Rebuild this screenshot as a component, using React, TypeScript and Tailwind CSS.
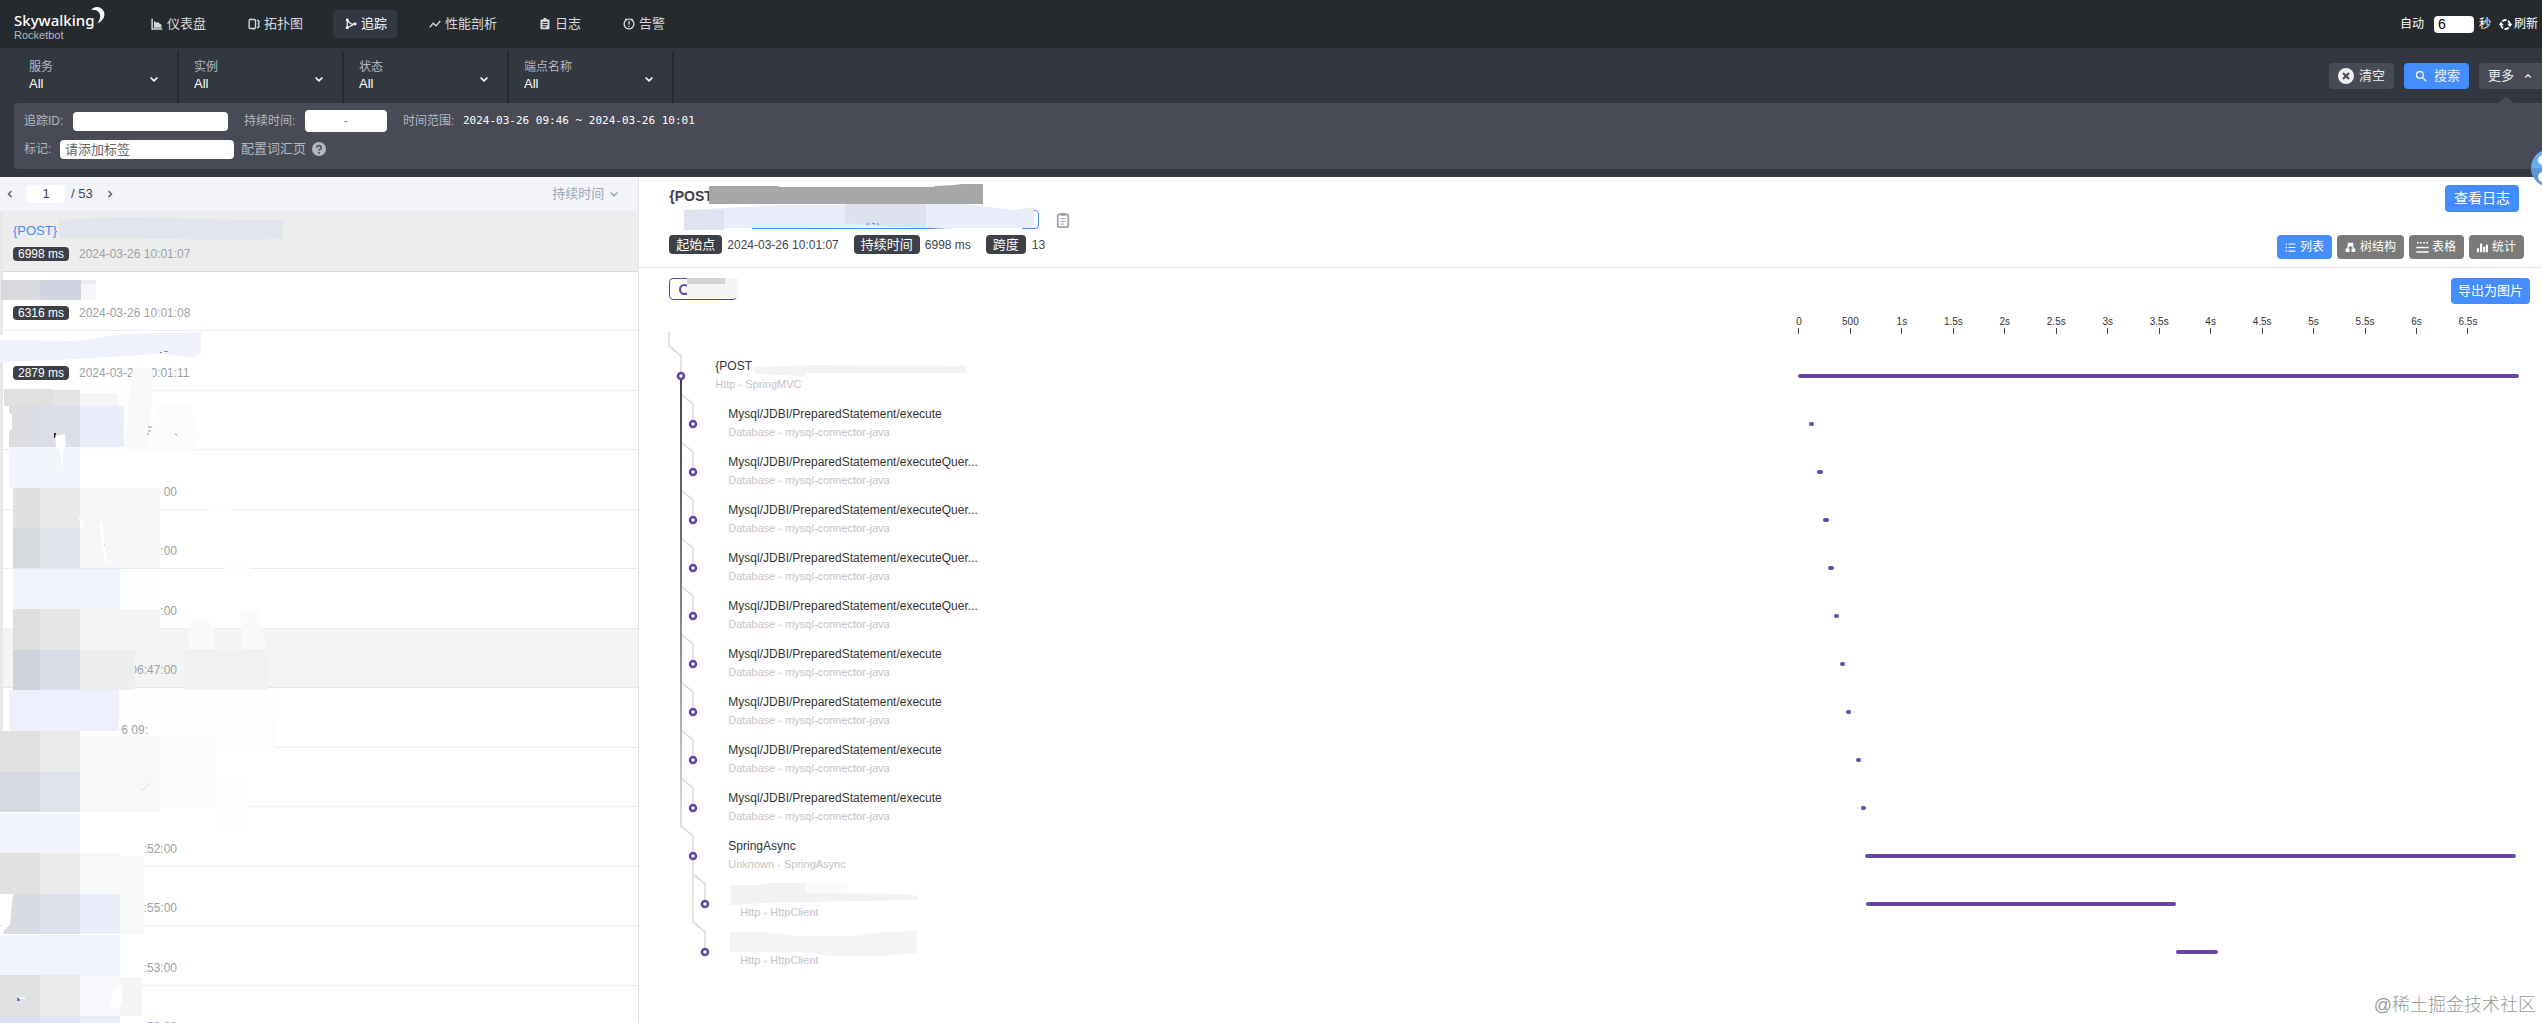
import type { ReactNode } from 'react';

const navItems = [
  { label: '仪表盘', icon: 'dashboard' },
  { label: '拓扑图', icon: 'topology' },
  { label: '追踪', icon: 'trace', active: true },
  { label: '性能剖析', icon: 'profile' },
  { label: '日志', icon: 'log' },
  { label: '告警', icon: 'alarm' },
];

const filters = [
  { id: 'service', label: '服务' },
  { id: 'instance', label: '实例' },
  { id: 'status', label: '状态' },
  { id: 'endpoint', label: '端点名称' },
];

type Trace = { name?: string; duration?: string; time?: string; cut?: boolean; state?: string };

const traces: Trace[] = [
  { name: '{POST}', duration: '6998 ms', time: '2024-03-26 10:01:07', state: 'selected' },
  { duration: '6316 ms', time: '2024-03-26 10:01:08' },
  { duration: '2879 ms', time: '2024-03-26 10:01:11' },
  {},
  { time: '00' },
  { time: ':00' },
  { time: ':00' },
  { time: '06:47:00', state: 'hover' },
  { time: '6 09:', cut: true },
  {},
  { time: ':52:00' },
  { time: ':55:00' },
  { time: ':53:00' },
  { time: ':59:00' },
];

type Span = { name?: string; sub: string; depth: number; start: number; length: number };

const db = 'Database - mysql-connector-java';
const execute = 'Mysql/JDBI/PreparedStatement/execute';
const executeQuery = 'Mysql/JDBI/PreparedStatement/executeQuer...';

// start and length are percentages of the whole trace
const spans: Span[] = [
  { name: '{POST', sub: 'Http - SpringMVC', depth: 0, start: 0, length: 99.9 },
  { name: execute, sub: db, depth: 1, start: 1.5, length: 0.7 },
  { name: executeQuery, sub: db, depth: 1, start: 2.6, length: 0.8 },
  { name: executeQuery, sub: db, depth: 1, start: 3.4, length: 0.8 },
  { name: executeQuery, sub: db, depth: 1, start: 4.1, length: 0.8 },
  { name: executeQuery, sub: db, depth: 1, start: 4.9, length: 0.7 },
  { name: execute, sub: db, depth: 1, start: 5.8, length: 0.7 },
  { name: execute, sub: db, depth: 1, start: 6.6, length: 0.7 },
  { name: execute, sub: db, depth: 1, start: 8, length: 0.7 },
  { name: execute, sub: db, depth: 1, start: 8.7, length: 0.7 },
  { name: 'SpringAsync', sub: 'Unknown - SpringAsync', depth: 1, start: 9.3, length: 90.2 },
  { sub: 'Http - HttpClient', depth: 2, start: 9.4, length: 43 },
  { sub: 'Http - HttpClient', depth: 2, start: 52.4, length: 5.8 },
];

const ticks = ['0', '500', '1s', '1.5s', '2s', '2.5s', '3s', '3.5s', '4s', '4.5s', '5s', '5.5s', '6s', '6.5s'];

const indent = ['pl-[46px]', 'pl-[59px]', 'pl-[71px]'];

function Icon({ name, className = 'size-3' }: { name: string; className?: string }) {
  const shapes: Record<string, ReactNode> = {
    dashboard: (
      <>
        <path d="M1.5 1v13.5H15" fill="none" stroke="currentColor" strokeWidth="2" />
        <path d="M4 4l4 2.5V5l6 4v4H4z" />
      </>
    ),
    topology: (
      <g fill="none" stroke="currentColor" strokeWidth="1.8">
        <rect x="1.5" y="2" width="8.5" height="12" rx="1.5" />
        <path d="M4 .5v1.500M8 14v1.500M12 3l2.500 1v3l-1 1 1 1v3L12 13" />
      </g>
    ),
    trace: (
      <g fill="none" stroke="currentColor" strokeWidth="1.5">
        <path d="M3 2v11M3 13l8-4M3 3l5 5h5" />
        <circle cx="3" cy="2.500" r="1" />
        <circle cx="3" cy="13" r="1.200" />
        <circle cx="13.500" cy="8" r="1.200" />
      </g>
    ),
    profile: <path d="M1 12.500L5.500 7l4 3.500L15 4" fill="none" stroke="currentColor" strokeWidth="1.800" />,
    log: (
      <path
        fillRule="evenodd"
        d="M3 2h2.500a2.500 2.500 0 015 0H13a1 1 0 011 1v11a1 1 0 01-1 1H3a1 1 0 01-1-1V3a1 1 0 011-1zm1.500 3v1.500h7V5zm0 3v1.500h7V8zm0 3v1.500h5V11z"
      />
    ),
    alarm: (
      <g fill="none" stroke="currentColor" strokeWidth="1.800">
        <circle cx="8" cy="8" r="6.500" />
        <path d="M8 4v5M8 10.500V12M5 1L3 3M11 1l2 2" />
      </g>
    ),
    down: <path d="M2.500 5.500L8 11l5.500-5.500" fill="none" stroke="currentColor" strokeWidth="2.500" />,
    up: <path d="M2.500 11L8 5.500 13.500 11" fill="none" stroke="currentColor" strokeWidth="2.500" />,
    left: <path d="M10 4L6 8l4 4" fill="none" stroke="currentColor" strokeWidth="2" />,
    right: <path d="M6 4l4 4-4 4" fill="none" stroke="currentColor" strokeWidth="2" />,
    clear: (
      <>
        <circle cx="8" cy="8" r="8" />
        <path d="M5 5l6 6M11 5l-6 6" stroke="#484b55" strokeWidth="2" />
      </>
    ),
    search: (
      <g fill="none" stroke="currentColor" strokeWidth="1.700">
        <circle cx="6.500" cy="6.500" r="4.500" />
        <path d="M10 10l5 5" />
      </g>
    ),
    help: (
      <>
        <circle cx="8" cy="8" r="8" />
        <path d="M5.500 6.500a2.500 2.500 0 115 0c0 1.800-2.500 1.800-2.500 3.500M8 11.500v1.800" fill="none" stroke="#484b55" strokeWidth="1.800" />
      </>
    ),
    refresh: (
      <>
        <g fill="none" stroke="currentColor" strokeWidth="2.200">
          <path d="M2.500 8A5.500 5.500 0 005 12.600M6.800 13.400A5.500 5.500 0 0012 11.800M13.500 8A5.500 5.500 0 0011 3.400M9.200 2.600A5.500 5.500 0 004 4.200" />
        </g>
        <path d="M-.5 9L2.500 4.500 5.800 9zM10.200 7L13.500 11.500 16.500 7z" />
      </>
    ),
    copy: (
      <>
        <rect x="2" y="1.500" width="12" height="14.500" rx="1.500" fill="none" stroke="currentColor" strokeWidth="2" />
        <path d="M5 0h6v3H5zM5 6h6v1.200H5zM5 9h6v1.200H5zM5 12h4v1.200H5z" />
      </>
    ),
    list: <path d="M1 2h2v2H1zM5 2h10v1.700H5zM1 7h2v2H1zM5 7.200h10v1.700H5zM1 12h2v2H1zM5 12.300h10V14H5z" />,
    tree: (
      <>
        <path d="M4 1h8v5.500H4zM1 9.500h5.500v5H1zM9.500 9.500H15v5H9.500z" />
        <path d="M5 6L3.500 10M11 6l1.500 4" fill="none" stroke="currentColor" strokeWidth="2" />
      </>
    ),
    table: <path d="M0 0h2.500v2H0zM4.500 0H7v2H4.500zM9 0h2.500v2H9zM13.500 0H16v2h-2.500zM-1 7h18v2.200H-1zM-1 13.500h18v2.200H-1z" />,
    stats: <path d="M0 9h3v6H0zM4.500 2h3v13h-3zM9 7h3v8H9zM13 4h3v11h-3z" />,
  };
  return (
    <svg viewBox="0 0 16 16" className={`${className} shrink-0 overflow-visible`} fill="currentColor" aria-hidden="true">
      {shapes[name]}
    </svg>
  );
}

function Header() {
  return (
    <header className="flex h-12 shrink-0 items-center bg-[#252a2f] text-[13px] text-[#d6d8dc]">
      <div className="relative ml-3.5 mt-1 w-[125px] font-['Noto_Sans'] text-white">
        <div className="text-[15px] leading-[18px] font-medium">Skywalking</div>
        <div className="font-['Liberation_Sans'] text-[11px] leading-3 text-[#b5b8c2]">Rocketbot</div>
        <svg viewBox="0 0 14 17" className="absolute -top-1 left-[77px] h-[17px] w-3.5" fill="#fff" aria-hidden="true">
          <path d="M0 3C3-.5 8-1 11.500 2.500c4 4.500 1.500 11-5 14 3-4.500 3.500-8 1.500-11C6 3 3 2.500 0 3z" />
        </svg>
      </div>
      <nav className="flex gap-5">
        {navItems.map((item) => (
          <a
            key={item.label}
            href="#"
            className={`flex h-7 items-center gap-1 rounded pr-2.5 pl-3 ${item.active ? 'bg-[#333743] text-white' : ''}`}
          >
            <Icon name={item.icon} />
            {item.label}
          </a>
        ))}
      </nav>
      <div className="ml-auto flex items-center pr-1 text-xs text-white">
        <label htmlFor="auto">自动</label>
        <input id="auto" defaultValue="6" className="mr-[5px] ml-2.5 h-[17px] w-10 rounded-sm bg-white px-1 text-sm text-black" />
        <span>秒</span>
        <button className="ml-2 flex items-center gap-0.5">
          <Icon name="refresh" className="size-[13px]" />
          刷新
        </button>
      </div>
    </header>
  );
}

function SearchBar() {
  return (
    <section className="relative shrink-0 bg-[#333840] pb-2 text-xs text-[#b5b8c2]">
      <div className="flex h-[55px] items-center pl-3.5">
        {filters.map((f) => (
          <div key={f.id} className="relative mt-[3px] flex h-[52px] w-[165px] flex-col justify-center border-r-2 border-[#252a2f] pb-0.5 pl-[15px]">
            <label htmlFor={f.id} className="leading-4">{f.label}</label>
            <select id={f.id} className="w-full appearance-none text-[13px] leading-[18px] text-white">
              <option>All</option>
            </select>
            <span className="pointer-events-none absolute top-[23px] right-[18px] text-white">
              <Icon name="down" className="size-2.5" />
            </span>
          </div>
        ))}
        <div className="ml-auto flex h-[26px] gap-2.5 text-[13px] text-[#eee]">
          <button className="flex items-center gap-[5px] rounded bg-[#484b55] px-[9px]">
            <Icon name="clear" className="size-4" />
            清空
          </button>
          <button className="flex items-center gap-[7px] rounded bg-[#448dfe] pr-[9px] pl-[11px]">
            <Icon name="search" />
            搜索
          </button>
          <button className="flex items-center gap-2.5 rounded-l bg-[#484b55] pr-2.5 pl-[9px]">
            更多
            <Icon name="up" className="size-2" />
          </button>
        </div>
      </div>
      <svg viewBox="0 0 16 7" className="absolute top-12 right-7 h-[7px] w-4" aria-hidden="true">
        <path d="M0 7l8-7 8 7z" fill="#484b55" />
      </svg>
      <div className="ml-3.5 flex h-[66px] flex-col gap-[7px] rounded-l bg-[#484b55] pt-[7px] pl-2.5">
        <div className="flex h-[22px] items-center">
          <label htmlFor="traceId" className="w-[49px]">追踪ID:</label>
          <input id="traceId" className="h-[19px] w-[155px] rounded-sm bg-white px-1 text-black" />
          <label htmlFor="minDuration" className="ml-4 w-[61px]">持续时间:</label>
          <div className="flex h-[22px] w-[82px] items-center rounded-sm bg-white text-[#888]">
            <input id="minDuration" className="w-0 flex-1" />
            <span>-</span>
            <input aria-label="最大持续时间" className="w-0 flex-1" />
          </div>
          <span className="ml-4 w-[60px]">时间范围:</span>
          <span className="font-['DejaVu_Sans_Mono','Liberation_Mono',monospace] text-[11px] text-white">2024-03-26 09:46 ~ 2024-03-26 10:01</span>
        </div>
        <div className="flex h-5 items-center">
          <label htmlFor="tag" className="w-9">标记:</label>
          <input id="tag" placeholder="请添加标签" className="h-[19px] w-[174px] rounded-sm bg-white px-[5px] text-[13px] text-black placeholder:text-[#666]" />
          <a href="#" className="ml-[7px] flex items-center gap-1.5 text-[13px]">
            配置词汇页
            <Icon name="help" className="size-3.5" />
          </a>
        </div>
      </div>
    </section>
  );
}

// Blurred-out service names and timestamps over the trace list
function ListMask() {
  const blocks: [number, number, number, number, string][] = [
    [1, 280, 39, 20, '#d7d9dd'],
    [40, 280, 41, 20, '#d0d4e0'],
    [81, 280, 15, 4, '#ececec'],
    [81, 284, 15, 16, '#f6f6fb'],
    [80, 389, 72, 62, '#fefefe'],
    [4, 389, 50, 17, '#e0e0e0'],
    [54, 390, 26, 16, '#e4e4e4'],
    [9, 406, 31, 41, '#dcdde2'],
    [40, 406, 40, 41, '#dbdde8'],
    [80, 406, 44, 41, '#ebeefa'],
    [80, 393, 38, 13, '#f5f5f5'],
    [9, 447, 71, 41, '#f3f5fd'],
    [13, 488, 27, 40, '#dfdfdf'],
    [40, 488, 40, 40, '#e9e9e9'],
    [13, 528, 27, 40, '#d6dade'],
    [40, 528, 40, 40, '#dfe3ea'],
    [80, 488, 80, 80, '#f6f7f7'],
    [208, 507, 23, 4, '#fefefe'],
    [225, 566, 25, 4, '#fefefe'],
    [13, 569, 27, 40, '#f1f3fc'],
    [40, 569, 80, 40, '#f0f4fe'],
    [120, 569, 40, 40, '#fefefe'],
    [13, 609, 27, 41, '#dedede'],
    [40, 609, 40, 41, '#e7e7e7'],
    [80, 609, 80, 41, '#f4f5f5'],
    [13, 650, 27, 40, '#ced2db'],
    [40, 650, 40, 40, '#d9dde8'],
    [80, 650, 55, 40, '#eceeef'],
    [184, 650, 84, 40, '#f1f1f1'],
    [119, 690, 156, 28, '#fefefe'],
    [160, 718, 115, 33, '#fdfdfd'],
    [9, 690, 110, 41, '#eef1fd'],
    [0, 731, 40, 41, '#e0e1e0'],
    [40, 731, 40, 41, '#e9eae9'],
    [80, 736, 80, 36, '#f8f9fa'],
    [160, 735, 55, 73, '#fcfcfc'],
    [215, 780, 33, 50, '#fefefe'],
    [0, 772, 40, 40, '#d6dae0'],
    [40, 772, 40, 40, '#dfe3ea'],
    [80, 772, 80, 40, '#f8f8f8'],
    [0, 813, 40, 40, '#f1f3fd'],
    [40, 813, 40, 40, '#f3f5fc'],
    [0, 853, 40, 41, '#e1e1e1'],
    [40, 853, 40, 41, '#eaebea'],
    [80, 853, 40, 41, '#f6f8f9'],
    [120, 856, 24, 78, '#f7f8f8'],
    [3, 894, 37, 40, '#d9dbe2'],
    [40, 894, 40, 40, '#dde0ea'],
    [80, 894, 40, 40, '#e9eefa'],
    [0, 935, 40, 40, '#f2f5fd'],
    [40, 935, 80, 40, '#eff3fe'],
    [0, 975, 40, 41, '#dfe1e2'],
    [40, 975, 40, 41, '#e9eae9'],
    [80, 975, 40, 41, '#f6f8fc'],
    [120, 977, 22, 39, '#f5f5f5'],
    [0, 1016, 40, 7, '#d6dfea'],
    [40, 1016, 40, 7, '#dfe5f2'],
    [80, 1016, 40, 7, '#e9effa'],
  ];
  return (
    <svg viewBox="0 212 638 811" className="pointer-events-none absolute top-0 left-0 h-[811px] w-[638px]" aria-hidden="true">
      <path d="M0 211h3v124H0zM0 361h3v370H0z" fill="#e8e8e8" />
      <path d="M58 220l60-3 60 1 60 2h45v19l-55 1-110-2H60z" fill="#e3e5ee" />
      <path d="M0 340l75 1 50-7 76-2v20q-2 5-12 5l-30-3-84 5-75 3z" fill="#eff2fd" />
      {blocks.map(([x, y, w, h, fill]) => (
        <rect key={`${x}-${y}`} x={x} y={y} width={w} height={h} fill={fill} />
      ))}
      <path d="M132 371q6-6 16-3l5 2-4 79h-25z" fill="#f9f9f9" />
      <path d="M156 405l34-1 10 36-6 10h-46z" fill="#fcfcfc" />
      <path d="M4 408l8 7v14l-3 3v15H4zM55 436l10-2 1 12-3 4v20l-3-20-4-4z" fill="#fff" />
      <path d="M54 433h2l-1 5h-1z" fill="#222" />
      <path d="M160 352h2v1h-2zM164 351h4v1h-4z" fill="#6f8ff0" />
      <path d="M148 427h4M148 431h3M147 435l2-2M175 434l2 1" stroke="#999" />
      <path d="M80 518l3 9M101 523l2 22 4 18" stroke="#fff" strokeWidth="3" />
      <path d="M188 628q2-10 14-10 14 2 13 31h-26zM240 612l18-2 8 39h-23z" fill="#fafafa" />
      <path d="M3 894h10l-3 30-7 8zM114 988l8-3v15l-3 8-10-2z" fill="#fff" />
      <path d="M142 790l3-2 3-3 2-2" stroke="#aaa" strokeDasharray="1 2" fill="none" />
      <path d="M17 998h3v3h-3z" fill="#6b78e0" />
      <path d="M19 997h6v2h-6z" fill="#fff" />
    </svg>
  );
}

function TraceList() {
  return (
    <aside className="flex w-[25.15%] shrink-0 flex-col border-r border-[#e4e5e8]">
      <div className="flex h-[35px] shrink-0 items-center border-b border-[#ebecf0] bg-[#f3f4f9] pr-[19px] pl-1 text-[#3d444f]">
        <button aria-label="上一页" className="text-[#666]"><Icon name="left" /></button>
        <input aria-label="页码" defaultValue="1" className="ml-[11px] h-[18px] w-[38px] rounded-sm bg-white text-center text-[13px]" />
        <span className="mx-1.5 text-[13px]">/ 53</span>
        <button aria-label="下一页" className="ml-[5px] text-[#666]"><Icon name="right" /></button>
        <label className="ml-auto flex items-center gap-1 text-[13px] text-[#9da5b2]">
          <select aria-label="排序" className="appearance-none">
            <option>持续时间</option>
          </select>
          <Icon name="down" className="size-2.5" />
        </label>
      </div>
      <div className="relative min-h-0 flex-1 overflow-hidden">
        <ul>
          {traces.map((t, i) => (
            <li
              key={i}
              className={`flex flex-col justify-between border-b pt-2.5 pr-4 pb-2.5 pl-[13px] odd:h-[60px] even:h-[59px] ${
                t.state === 'selected' ? 'border-[#d8d9db] bg-[#ededed]' : t.state === 'hover' ? 'border-[#e6e6e6] bg-[#f4f4f4]' : 'border-[#ebebeb]'
              }`}
            >
              <a href="#" className="h-[18px] text-[13px] leading-[18px] text-[#448dfe]">{t.name}</a>
              <div className="flex h-3.5 items-center text-xs text-[#9a9fa8]">
                {t.duration ? (
                  <>
                    <span className="mr-2.5 flex h-3.5 w-14 items-center justify-center rounded bg-[#3d4046] text-white">{t.duration}</span>
                    {t.time}
                  </>
                ) : (
                  <span className={`text-right ${t.cut ? 'w-[135px]' : 'w-[164px]'}`}>{t.time}</span>
                )}
              </div>
            </li>
          ))}
        </ul>
        <ListMask />
      </div>
    </aside>
  );
}

function TraceHeader() {
  const badge = 'rounded bg-[#3d4046] px-[7px] text-[13px] leading-[19px] text-white';
  const views = [
    { label: '列表', icon: 'list', active: true },
    { label: '树结构', icon: 'tree' },
    { label: '表格', icon: 'table' },
    { label: '统计', icon: 'stats' },
  ];
  return (
    <div className="flex h-[91px] shrink-0 justify-between border-b border-[#dfe0e2] pr-[18px] pb-2 pl-[30px]">
      <div className="relative pt-2.5">
        <h5 className="text-sm leading-[18px] font-bold text-[#3d4046]">{'{POST'}</h5>
        <div className="mt-[5px] flex items-center gap-[17px]">
          <select aria-label="追踪ID" className="h-[19px] w-[370px] appearance-none rounded border border-[#448dfe] bg-white" />
          <button aria-label="复制" className="text-[#9a9fa8]"><Icon name="copy" className="size-3.5" /></button>
        </div>
        <div className="mt-1.5 flex items-center text-xs text-[#3d444f]">
          <span className={badge}>起始点</span>
          <span className="ml-[5px]">2024-03-26 10:01:07</span>
          <span className={`ml-[15px] ${badge}`}>持续时间</span>
          <span className="ml-[5px]">6998 ms</span>
          <span className={`ml-[15px] ${badge}`}>跨度</span>
          <span className="ml-[6px]">13</span>
        </div>
        <svg viewBox="669 177 380 60" className="pointer-events-none absolute top-0 left-0 h-[60px] w-[380px] overflow-visible" aria-hidden="true">
          <path d="M667 208h85v24h-85z" fill="#fff" />
          <path d="M709 186h69l1 1h155l1-1 20-1 6-1h22v20H709z" fill="#a7a7a7" />
          <path d="M684 210l100-5 180-1 50 6 20-3v17l-4 4h-34l-30 2-75-4-90 2H684z" fill="#e9edf9" />
          <path d="M684 210h40v20h-40z" fill="#dee2f1" />
          <path d="M845 204h81v24l-40-1-41-4z" fill="#dfe1ef" />
          <path d="M952 228h70v3h-70z" fill="#fff" />
          <path d="M866 224h3M872 223l3 1M877 224h2" stroke="#448dfe" />
        </svg>
      </div>
      <div className="flex flex-col items-end justify-between pt-2">
        <button className="mr-[5px] rounded bg-[#448dfe] px-[9px] text-sm leading-[27px] text-white">查看日志</button>
        <div className="flex gap-[5px]">
          {views.map((v) => (
            <button
              key={v.label}
              className={`flex h-6 items-center gap-1 rounded px-2 text-xs text-white ${v.active ? 'bg-[#448dfe]' : 'bg-[#7a7a7a]'}`}
            >
              <Icon name={v.icon} className="size-[11px]" />
              {v.label}
            </button>
          ))}
        </div>
      </div>
    </div>
  );
}

function TreeLines() {
  const nodes = spans.map((s, i) => ({ x: 681 + s.depth * 12, y: 376 + i * 48, depth: s.depth }));
  return (
    <svg viewBox="669 332 300 640" className="pointer-events-none absolute top-0 left-0 h-[640px] w-[300px] -translate-y-0.5 overflow-visible" fill="none" aria-hidden="true">
      <defs>
        <linearGradient id="trunk" gradientUnits="userSpaceOnUse" x1="0" y1="380" x2="0" y2="826">
          <stop offset="0" stopColor="#444" />
          <stop offset="0.6" stopColor="#8e8e8e" />
          <stop offset="1" stopColor="#e0e0e0" />
        </linearGradient>
      </defs>
      <g stroke="#e2e2e2" strokeWidth="2">
        {nodes.map((n) => (
          <path key={n.y} d={`M${n.x - 12} ${n.y - (n.y === 376 ? 44 : 36)}V${n.y - 30}L${n.x} ${n.y - 20}V${n.y}`} />
        ))}
        <path d="M693 860V922" />
      </g>
      <path d="M681 380h.01V826" stroke="url(#trunk)" strokeWidth="2" />
      <g stroke="#6243a5" strokeWidth="2.500" fill="#fff">
        {nodes.map((n) => (
          <circle key={n.y} cx={n.x} cy={n.y} r="3" />
        ))}
      </g>
      <path d="M753 367l60-2 153 1v7H806l-1 3-50-2z" fill="#f3f3f3" />
      <path d="M731 885h28l10-2h36v10l100 1 13 2v4l-60 1-95 2-30 2h-2z" fill="#f2f2f2" />
      <path d="M805 883h42v10h-42z" fill="#fafafa" />
      <path d="M730 932h36l30 4h60l24-4 37-1v22l-32 3h-53l-30-4h-72z" fill="#f4f4f4" />
    </svg>
  );
}

function TraceDetail() {
  return (
    <div className="min-h-0 flex-1 overflow-hidden pr-[22px] pl-[30px]">
      <div className="-mr-2.5 flex items-start justify-between pt-2.5">
        <div className="relative flex h-[22px] w-[68px] items-center rounded border border-[#6243a5] pl-[9px]">
          <span className="size-[11px] rounded-full border-2 border-[#6243a5]" />
          <svg viewBox="0 0 51 20" className="absolute -top-px left-[17px] h-5 w-[51px]" aria-hidden="true">
            <path d="M0 0h51v20H0z" fill="#f6f4f7" />
            <path d="M0 0h38v6H0z" fill="#d3d3d3" />
          </svg>
        </div>
        <button className="rounded bg-[#448dfe] px-[7px] text-[13px] leading-[26px] text-white">导出为图片</button>
      </div>
      <div className="mt-3 flex h-[18px] justify-end">
        <div className="relative w-[39%]">
          {ticks.map((t, i) => (
            <div key={t} className="absolute flex w-10 -translate-x-1/2 flex-col items-center text-[10px] leading-3 text-[#333]" style={{ left: `${i * 7.13 + 0.1}%` }}>
              {t}
              <span className="h-1.5 w-px bg-[#444]" />
            </div>
          ))}
        </div>
      </div>
      <div className="relative pt-[18px]">
        <TreeLines />
        <ul className="relative">
          {spans.map((s, i) => (
            <li key={i} className="flex h-12">
              <div className={`flex flex-1 flex-col pt-[5px] ${indent[s.depth]}`}>
                <span className="h-[18px] text-xs leading-[18px] text-[#333]">{s.name}</span>
                <span className="text-[11px] leading-[18px] text-[#c4c4c4]">{s.sub}</span>
              </div>
              <div className="flex w-[39%] items-center">
                <div className="h-1 min-w-1 rounded-sm bg-[#6b45a8]" style={{ marginLeft: `${s.start}%`, width: `${s.length}%` }} />
              </div>
            </li>
          ))}
        </ul>
      </div>
    </div>
  );
}

export default function App() {
  return (
    <div className="relative flex h-screen flex-col overflow-hidden bg-white font-['Liberation_Sans','Noto_Sans_CJK_SC',sans-serif]">
      <Header />
      <SearchBar />
      <main className="flex min-h-0 flex-1">
        <TraceList />
        <section className="flex min-w-0 flex-1 flex-col">
          <TraceHeader />
          <TraceDetail />
        </section>
      </main>

      {/* Floating helper, half off the right edge */}
      <svg viewBox="0 0 11 38" className="absolute top-[149px] right-0 h-[38px] w-[11px]" aria-hidden="true">
        <circle cx="19" cy="19" r="19" fill="#6aadf0" />
        <path d="M0 19h11v17Q1 30 0 19z" fill="#5a96d2" />
        <circle cx="12" cy="11" r="5" fill="#fff" />
        <circle cx="12" cy="28" r="5" fill="#fff" />
      </svg>
      <span className="absolute right-1.5 bottom-1 text-lg font-light text-[#9a9a9a]">@稀土掘金技术社区</span>
    </div>
  );
}
